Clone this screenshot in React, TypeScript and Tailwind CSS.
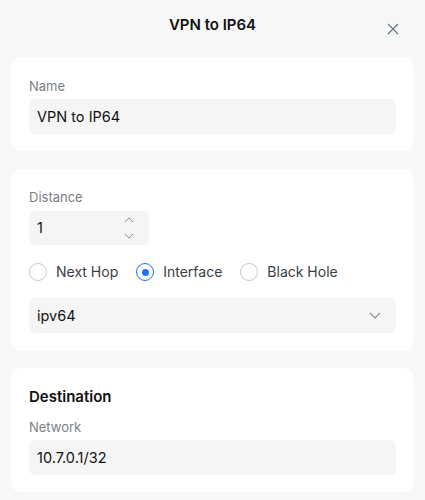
import { useState } from 'react';

function Chevron({ up, className }: { up?: boolean; className?: string }) {
  return (
    <svg viewBox="0 0 12 7" className={className} fill="none" stroke="currentColor" strokeWidth="1.2">
      {up ? <path d="M1 6L6 1l5 5" /> : <path d="M1 1l5 5 5-5" />}
    </svg>
  );
}

function Radio({ label, checked, onClick }: { label: string; checked: boolean; onClick: () => void }) {
  return (
    <button type="button" onClick={onClick} className="flex items-center gap-[9px]">
      <span
        className={
          checked
            ? 'w-[18px] h-[18px] rounded-full border-[1.5px] border-[#1a73f5] flex items-center justify-center'
            : 'w-[18px] h-[18px] rounded-full border border-[#c8c9cc] flex items-center justify-center'
        }
      >
        {checked && <span className="w-[7px] h-[7px] rounded-full bg-[#1a73f5]" />}
      </span>
      <span className="text-[14px] leading-[18px] text-[#3a3d45]">{label}</span>
    </button>
  );
}

export default function App() {
  const [mode, setMode] = useState('interface');

  return (
    <div className="min-h-[500px] bg-[#f6f7f7] px-[11px] font-['Inter',sans-serif] text-[#111]">
      <div className="relative h-[57px] flex items-center justify-center">
        <h1 className="text-[15px] font-semibold -mt-[7px]">VPN to IP64</h1>
        <button className="absolute right-[15px] top-[23px] text-[#6b6f78]">
          <svg viewBox="0 0 12 12" className="w-[12px] h-[12px]" fill="none" stroke="currentColor" strokeWidth="1.1">
            <path d="M1 1l10 10M11 1L1 11" />
          </svg>
        </button>
      </div>

      <div className="bg-white rounded-[10px] px-[18px] pt-[20px] pb-[17px]">
        <label className="block text-[13px] text-[#7a7e87] leading-[18px] mb-[4px]">Name</label>
        <div className="h-[35px] bg-[#f5f5f5] rounded-[6px] px-[8px] flex items-center text-[14.5px]">VPN to IP64</div>
      </div>

      <div className="bg-white rounded-[10px] px-[18px] pt-[19px] pb-[18px] mt-[18px]">
        <label className="block text-[13px] text-[#7a7e87] leading-[18px] mb-[5px]">Distance</label>
        <div className="w-[120px] h-[34px] bg-[#f5f5f5] rounded-[6px] pl-[8px] pr-[15px] flex items-center justify-between text-[14.5px]">
          <span>1</span>
          <div className="flex flex-col gap-[10px] text-[#8a8d94]">
            <Chevron up className="w-[10px] h-[6px]" />
            <Chevron className="w-[10px] h-[6px]" />
          </div>
        </div>
        <div className="flex items-center gap-[18px] mt-[18px]">
          <Radio label="Next Hop" checked={mode === 'nexthop'} onClick={() => setMode('nexthop')} />
          <Radio label="Interface" checked={mode === 'interface'} onClick={() => setMode('interface')} />
          <Radio label="Black Hole" checked={mode === 'blackhole'} onClick={() => setMode('blackhole')} />
        </div>
        <div className="h-[35px] mt-[17px] bg-[#f5f5f5] rounded-[6px] pl-[8px] pr-[15px] flex items-center justify-between text-[14.5px]">
          <span>ipv64</span>
          <Chevron className="w-[12px] h-[7px] text-[#8a8d94]" />
        </div>
      </div>

      <div className="bg-white rounded-[10px] px-[18px] pt-[19px] pb-[17px] mt-[17px]">
        <h2 className="text-[15px] font-semibold leading-[20px]">Destination</h2>
        <label className="block text-[13px] text-[#7a7e87] leading-[18px] mt-[11px] mb-[4px]">Network</label>
        <div className="h-[35px] bg-[#f5f5f5] rounded-[6px] px-[8px] flex items-center text-[14.5px]">10.7.0.1/32</div>
      </div>
    </div>
  );
}
